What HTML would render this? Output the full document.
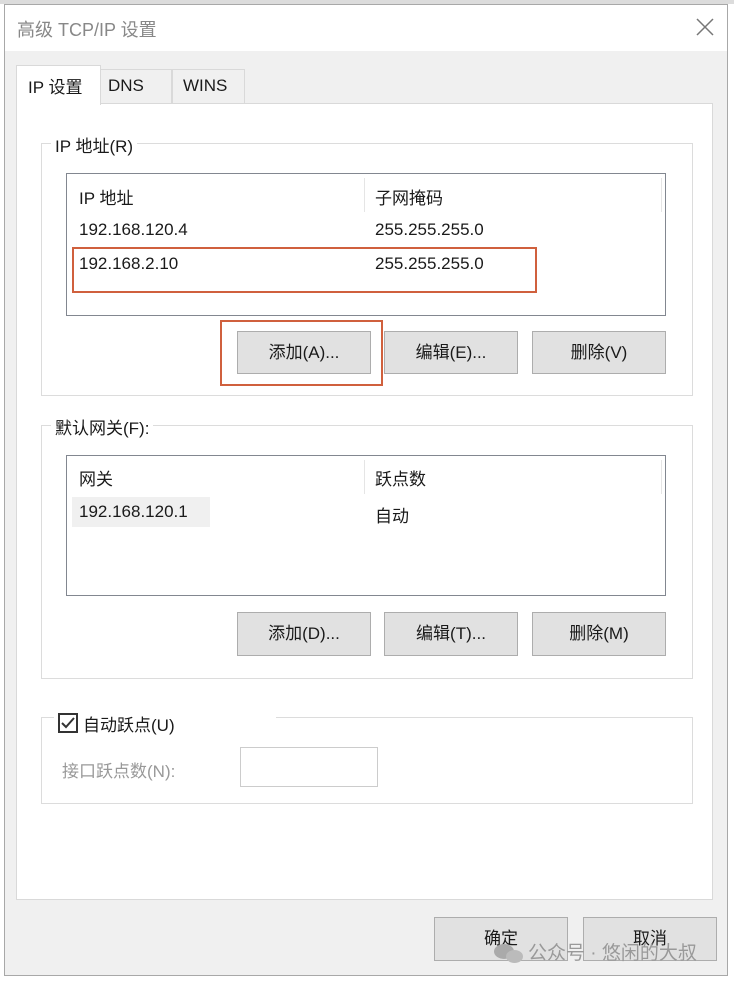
<!DOCTYPE html>
<html><head><meta charset="utf-8"><style>
*{margin:0;padding:0;box-sizing:border-box}
body{width:734px;height:981px;background:#fff;position:relative;overflow:hidden;font-family:"Liberation Sans","Noto Sans CJK SC",sans-serif;font-size:17px;color:#1a1a1a}
.a{position:absolute}
.win{left:4px;top:4px;width:724px;height:972px;background:#f0f0f0;border:1px solid #a8a8a8}
.title{left:5px;top:5px;width:722px;height:46px;background:#fff}
.panel{left:16px;top:103px;width:697px;height:797px;background:#fff;border:1px solid #d9d9d9}
.gb{border:1px solid #dcdcdc}
.lb{background:#fff;border:1px solid #828790}
.btn{background:#e1e1e1;border:1px solid #adadad;text-align:center;line-height:41px}
.lbl{background:#fff;padding:0 4px}
</style></head><body>
<div class="a" style="left:0;top:0;width:734px;height:4px;background:#dcdcdc"></div>
<div class="a win"></div>
<div class="a title"></div>
<div class="a" style="left:17px;top:16px;color:#888;font-size:18px">高级 TCP/IP 设置</div>
<svg class="a" style="left:696px;top:18px" width="18" height="18"><path d="M1 1 L17 17 M17 1 L1 17" stroke="#777" stroke-width="1.5"/></svg>
<div class="a" style="left:100px;top:69px;width:72px;height:35px;background:#f0f0f0;border:1px solid #d9d9d9"></div>
<div class="a" style="left:172px;top:69px;width:73px;height:35px;background:#f0f0f0;border:1px solid #d9d9d9"></div>
<div class="a panel"></div>
<div class="a" style="left:16px;top:65px;width:85px;height:40px;background:#fff;border:1px solid #d9d9d9;border-bottom:none"></div>
<div class="a" style="left:28px;top:73px">IP 设置</div>
<div class="a" style="left:108px;top:76px">DNS</div>
<div class="a" style="left:183px;top:76px">WINS</div>

<div class="a gb" style="left:41px;top:143px;width:652px;height:253px"></div>
<div class="a lbl" style="left:51px;top:132px">IP 地址(R)</div>
<div class="a lb" style="left:66px;top:173px;width:600px;height:143px"></div>
<div class="a" style="left:364px;top:178px;width:1px;height:34px;background:#e5e5e5"></div>
<div class="a" style="left:661px;top:178px;width:1px;height:34px;background:#e5e5e5"></div>
<div class="a" style="left:79px;top:184px">IP 地址</div>
<div class="a" style="left:375px;top:184px">子网掩码</div>
<div class="a" style="left:79px;top:220px">192.168.120.4</div>
<div class="a" style="left:375px;top:220px">255.255.255.0</div>
<div class="a" style="left:79px;top:254px">192.168.2.10</div>
<div class="a" style="left:375px;top:254px">255.255.255.0</div>
<div class="a" style="left:72px;top:247px;width:465px;height:46px;border:2px solid #d0603d"></div>
<div class="a btn" style="left:237px;top:331px;width:134px;height:43px">添加(A)...</div>
<div class="a btn" style="left:384px;top:331px;width:134px;height:43px">编辑(E)...</div>
<div class="a btn" style="left:532px;top:331px;width:134px;height:43px">删除(V)</div>
<div class="a" style="left:220px;top:320px;width:163px;height:66px;border:2px solid #d0603d"></div>

<div class="a gb" style="left:41px;top:425px;width:652px;height:254px"></div>
<div class="a lbl" style="left:51px;top:414px">默认网关(F):</div>
<div class="a lb" style="left:66px;top:455px;width:600px;height:141px"></div>
<div class="a" style="left:364px;top:460px;width:1px;height:34px;background:#e5e5e5"></div>
<div class="a" style="left:661px;top:460px;width:1px;height:34px;background:#e5e5e5"></div>
<div class="a" style="left:79px;top:465px">网关</div>
<div class="a" style="left:375px;top:465px">跃点数</div>
<div class="a" style="left:72px;top:497px;width:138px;height:30px;background:#f0f0f0"></div>
<div class="a" style="left:79px;top:502px">192.168.120.1</div>
<div class="a" style="left:375px;top:502px">自动</div>
<div class="a btn" style="left:237px;top:612px;width:134px;height:44px">添加(D)...</div>
<div class="a btn" style="left:384px;top:612px;width:134px;height:44px">编辑(T)...</div>
<div class="a btn" style="left:532px;top:612px;width:134px;height:44px">删除(M)</div>

<div class="a gb" style="left:41px;top:717px;width:652px;height:87px"></div>
<div class="a" style="left:54px;top:705px;width:222px;height:26px;background:#fff"></div>
<div class="a" style="left:58px;top:713px;width:20px;height:20px;border:2px solid #333;background:#fff"></div>
<svg class="a" style="left:58px;top:713px" width="20" height="20"><path d="M4 10 L8 14 L16 5" stroke="#333" stroke-width="2" fill="none"/></svg>
<div class="a" style="left:83px;top:711px">自动跃点(U)</div>
<div class="a" style="left:62px;top:757px;color:#999">接口跃点数(N):</div>
<div class="a" style="left:240px;top:747px;width:138px;height:40px;border:1px solid #ccc;background:#fff"></div>

<div class="a btn" style="left:434px;top:917px;width:134px;height:44px">确定</div>
<div class="a btn" style="left:583px;top:917px;width:134px;height:44px">取消</div>
<div class="a" style="left:528px;top:938px;color:#999;font-size:19px">公众号 · 悠闲的大叔</div>
<div class="a" style="left:494px;top:944px;width:20px;height:15px;border-radius:50%;background:#aaa"></div>
<div class="a" style="left:506px;top:950px;width:17px;height:13px;border-radius:50%;background:#bbb"></div>
</body></html>
